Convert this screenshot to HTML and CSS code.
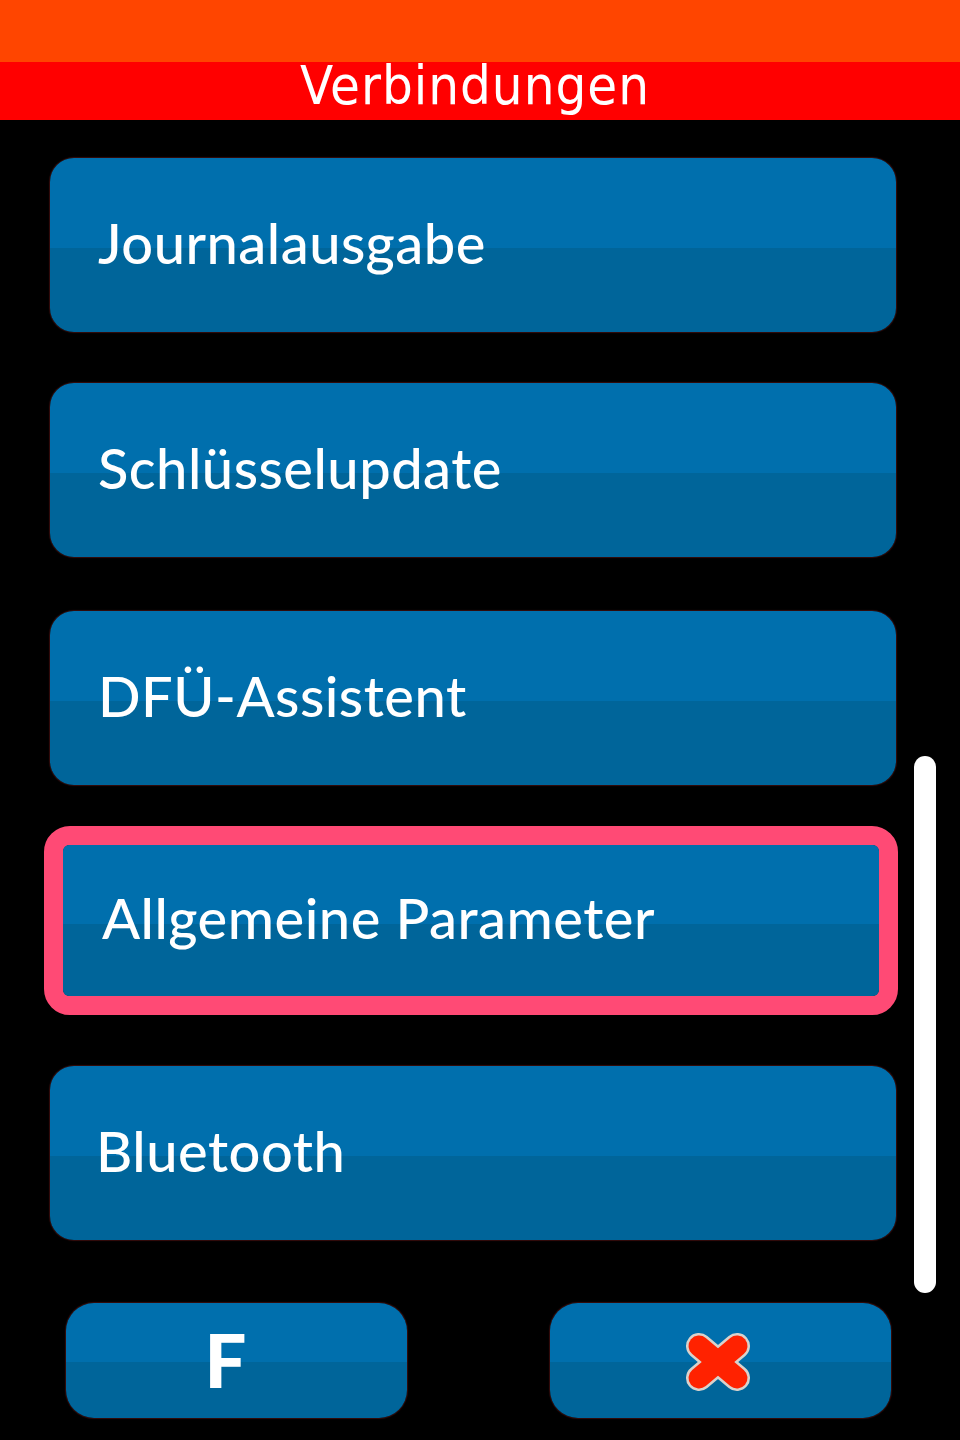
FILE: index.html
```html
<!DOCTYPE html>
<html lang="de">
<head>
<meta charset="utf-8">
<title>Verbindungen</title>
<link rel="stylesheet" href="styles.css">
</head>
<body>
<div class="screen">
  <div class="statusbar"></div>
  <div class="titlebar"><h1 class="title">Verbindungen</h1></div>
  <div class="list">
    <div class="item item-1"><span class="label">Journalausgabe</span></div>
    <div class="item item-2"><span class="label">Schlüsselupdate</span></div>
    <div class="item item-3"><span class="label">DFÜ-Assistent</span></div>
    <div class="selected">
      <div class="item item-sel"><span class="label">Allgemeine Parameter</span></div>
    </div>
    <div class="item item-5"><span class="label">Bluetooth</span></div>
  </div>
  <div class="scrollbar"></div>
  <div class="footer">
    <div class="fbtn"><span class="fkey">F</span></div>
    <div class="fbtn">
      <svg class="xicon" width="70" height="62" viewBox="0 0 70 62">
        <g stroke-linecap="round">
          <line x1="16" y1="15" x2="54" y2="47" stroke="#d9d2cc" stroke-width="26"/>
          <line x1="54" y1="15" x2="16" y2="47" stroke="#d9d2cc" stroke-width="26"/>
          <line x1="16" y1="15" x2="54" y2="47" stroke="#ff2200" stroke-width="21"/>
          <line x1="54" y1="15" x2="16" y2="47" stroke="#ff2200" stroke-width="21"/>
        </g>
      </svg>
    </div>
  </div>
</div>
</body>
</html>
```

FILE: styles.css
```css
html, body {
  margin: 0;
  padding: 0;
  background: #000;
}
.screen {
  position: relative;
  width: 960px;
  height: 1440px;
  background: #000;
  overflow: hidden;
  font-family: Lato, "Noto Sans", sans-serif;
  color: #fff;
}
.statusbar {
  height: 62px;
  background: #ff4500;
}
.titlebar {
  height: 58px;
  background: #ff0000;
  display: flex;
  justify-content: center;
}
.title {
  margin: 0;
  font-family: "DejaVu Sans Condensed", "DejaVu Sans", sans-serif;
  font-stretch: condensed;
  font-weight: normal;
  font-size: 54px;
  line-height: 50px;
  letter-spacing: 1px;
  margin-top: -1px;
  margin-right: 10px;
}
.list {
  display: flex;
  flex-direction: column;
  padding: 38px 64px 0 50px;
}
.item {
  height: 174px;
  border-radius: 24px;
  background: linear-gradient(to bottom, #006fad 0%, #006fad 52%, #00659a 52%, #00659a 100%);
  box-shadow: 0 0 1px 1px rgba(90, 20, 20, 0.6);
  display: flex;
  align-items: center;
  padding-left: 48px;
  box-sizing: border-box;
}
.label {
  font-size: 56px;
  font-weight: 500;
  letter-spacing: 0.5px;
  margin-top: -6px;
}
.item-2 { margin-top: 51px; }
.item-3 { margin-top: 54px; }
.item-5 { margin-top: 51px; padding-left: 46px; }
.selected {
  margin: 41px -2px 0 -6px;
  border: 19px solid #ff4a75;
  border-radius: 26px;
}
.item-sel {
  height: 151px;
  border-radius: 6px;
  box-shadow: none;
  padding-left: 39px;
}
.scrollbar {
  position: absolute;
  left: 914px;
  top: 756px;
  width: 22px;
  height: 537px;
  border-radius: 11px;
  background: #fff;
}
.footer {
  position: absolute;
  left: 0;
  right: 0;
  top: 1303px;
  display: flex;
  padding-left: 66px;
  gap: 143px;
}
.footer .fbtn {
  width: 341px;
  height: 115px;
  border-radius: 28px;
  background: linear-gradient(to bottom, #006fad 0%, #006fad 51%, #00659a 51%, #00659a 100%);
  box-shadow: 0 0 1px 1px rgba(90, 20, 20, 0.6);
  display: flex;
  align-items: center;
  justify-content: center;
}
.fkey {
  font-size: 74px;
  font-weight: 900;
  line-height: 1;
  margin-left: -22px;
  margin-top: -2px;
}
.xicon {
  display: block;
  margin-left: -6px;
  margin-top: 2px;
}
```
